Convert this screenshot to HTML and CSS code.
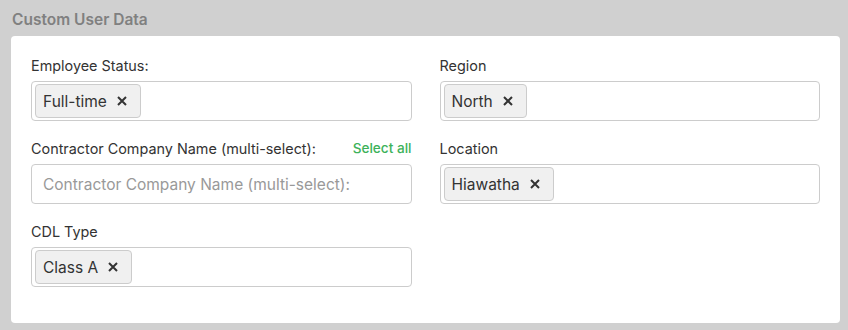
FILE: index.html
```html
<!DOCTYPE html>
<html>
	<head>
		<meta charset="utf-8" />
		<title>Custom User Data</title>
		<link rel="stylesheet" href="styles.css">
	</head>
	<body>
		<div class="section_title">Custom User Data</div>
		<div class="card">
			<div class="field">
				<div class="field_label"><span>Employee Status:</span></div>
				<div class="select_box">
					<span class="tag">Full-time <svg class="tag_x" viewBox="0 0 10 10"><path d="M1 1L9 9M9 1L1 9" /></svg></span>
				</div>
			</div>
			<div class="field">
				<div class="field_label"><span>Region</span></div>
				<div class="select_box">
					<span class="tag">North <svg class="tag_x" viewBox="0 0 10 10"><path d="M1 1L9 9M9 1L1 9" /></svg></span>
				</div>
			</div>
			<div class="field">
				<div class="field_label"><span>Contractor Company Name (multi-select):</span><a class="select_all">Select all</a></div>
				<div class="select_box">
					<span class="placeholder">Contractor Company Name (multi-select):</span>
				</div>
			</div>
			<div class="field">
				<div class="field_label"><span>Location</span></div>
				<div class="select_box">
					<span class="tag">Hiawatha <svg class="tag_x" viewBox="0 0 10 10"><path d="M1 1L9 9M9 1L1 9" /></svg></span>
				</div>
			</div>
			<div class="field">
				<div class="field_label"><span>CDL Type</span></div>
				<div class="select_box">
					<span class="tag">Class A <svg class="tag_x" viewBox="0 0 10 10"><path d="M1 1L9 9M9 1L1 9" /></svg></span>
				</div>
			</div>
		</div>
	</body>
</html>
```
FILE: styles.css
```css
body {
	margin: 0;
	background-color: #d0d0d0;
	font-family: "Inter", "Roboto", sans-serif;
	color: #333;
	height: 330px;
}

.section_title {
	padding: 10px 12px 6px 12px;
	height: 20px;
	line-height: 20px;
	font-size: 15.5px;
	font-weight: 600;
	color: #808080;
}

.card {
	margin: 0 8px 0 11px;
	background-color: #fff;
	border-radius: 4px;
	padding: 19px 20px 36px 20px;
	display: grid;
	grid-template-columns: 1fr 1fr;
	column-gap: 28px;
	row-gap: 17px;
}

.field_label {
	display: flex;
	justify-content: space-between;
	align-items: center;
	height: 20px;
	margin-bottom: 6px;
	font-size: 14.4px;
	color: #333;
}

.select_all {
	color: #3db25a;
	font-size: 13.6px;
	font-weight: 500;
	cursor: pointer;
}

.select_box {
	box-sizing: border-box;
	height: 40px;
	border: 1px solid #ccc;
	border-radius: 4px;
	padding: 2px 3px;
	display: flex;
	align-items: center;
}

.tag {
	box-sizing: border-box;
	height: 34px;
	display: inline-flex;
	align-items: center;
	padding: 0 13px 0 7px;
	background-color: #f0f0f0;
	border: 1px solid #ccc;
	border-radius: 4px;
	font-size: 15.5px;
	color: #333;
}

.tag_x {
	margin-left: 10px;
	width: 10px;
	height: 10px;
	stroke: #333;
	stroke-width: 2;
	fill: none;
}

.placeholder {
	padding-left: 8px;
	font-size: 15.5px;
	color: #999;
}
```
